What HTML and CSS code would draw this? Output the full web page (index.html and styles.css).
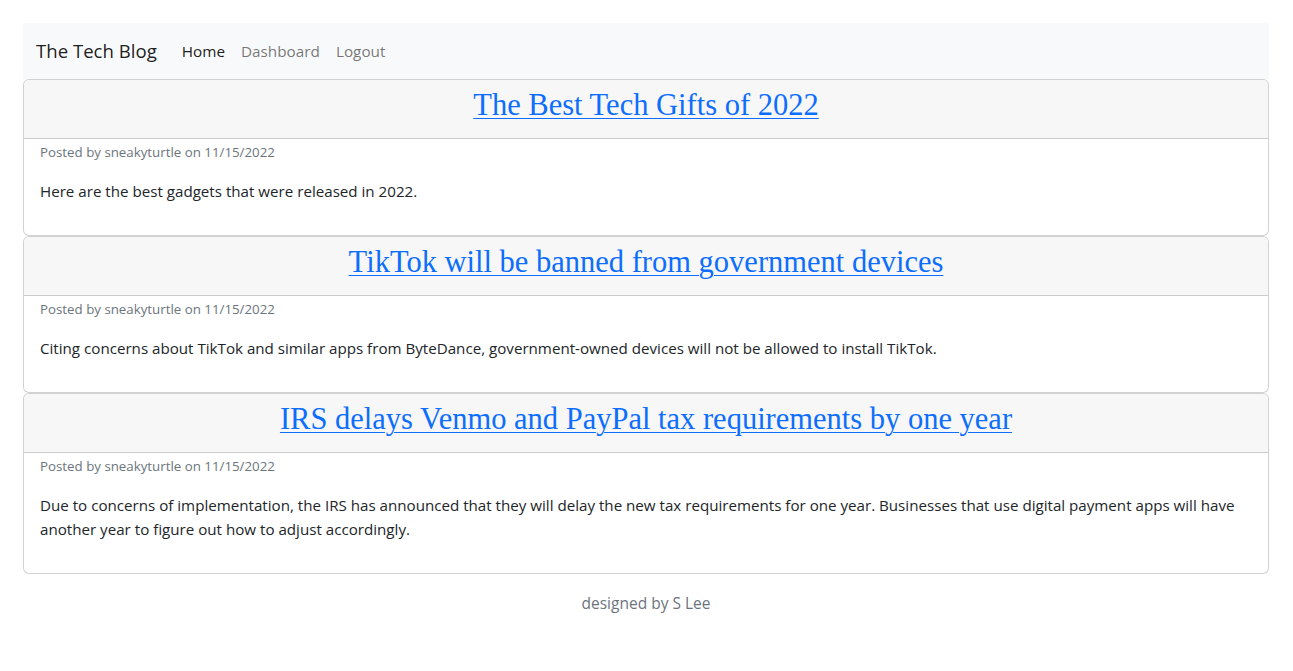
FILE: index.html
```html
<!DOCTYPE html>
<html lang="en">
<head>
<meta charset="utf-8">
<title>The Tech Blog</title>
<link rel="stylesheet" href="styles.css">
</head>
<body>
<div class="page">
  <nav class="navbar">
    <a class="brand" href="#">The Tech Blog</a>
    <ul class="nav">
      <li><a class="nav-link active" href="#">Home</a></li>
      <li><a class="nav-link" href="#">Dashboard</a></li>
      <li><a class="nav-link" href="#">Logout</a></li>
    </ul>
  </nav>
  <main class="posts">
    <article class="card">
      <header class="card-header"><h3 class="title"><a href="#">The Best Tech Gifts of 2022</a></h3></header>
      <div class="card-body">
        <p class="meta">Posted by sneakyturtle on 11/15/2022</p>
        <p class="content">Here are the best gadgets that were released in 2022.</p>
      </div>
    </article>
    <article class="card">
      <header class="card-header"><h3 class="title"><a href="#">TikTok will be banned from government devices</a></h3></header>
      <div class="card-body">
        <p class="meta">Posted by sneakyturtle on 11/15/2022</p>
        <p class="content">Citing concerns about TikTok and similar apps from ByteDance, government-owned devices will not be allowed to install TikTok.</p>
      </div>
    </article>
    <article class="card">
      <header class="card-header"><h3 class="title"><a href="#">IRS delays Venmo and PayPal tax requirements by one year</a></h3></header>
      <div class="card-body">
        <p class="meta">Posted by sneakyturtle on 11/15/2022</p>
        <p class="content">Due to concerns of implementation, the IRS has announced that they will delay the new tax requirements for one year. Businesses that use digital payment apps will have another year to figure out how to adjust accordingly.</p>
      </div>
    </article>
  </main>
  <footer class="footer">designed by S Lee</footer>
</div>
</body>
</html>
```

FILE: styles.css
```css
* { box-sizing: border-box; }
html, body { margin: 0; padding: 0; }
body {
  font-family: "Open Sans", "Noto Sans", sans-serif;
  font-size: 16px;
  line-height: 1.5;
  color: #212529;
  background: #fff;
}
.page {
  padding: 23px 24px 0 23px;
}
.navbar {
  display: flex;
  align-items: center;
  background: #f8f9fa;
  height: 56px;
  padding: 8px 13px;
}
.brand {
  font-size: 18.6px;
  line-height: 30px;
  padding: 5px 0;
  margin-right: 17px;
  color: rgba(0,0,0,.9);
  text-decoration: none;
}
.nav {
  display: flex;
  list-style: none;
  margin: 0;
  padding: 0;
}
.nav-link {
  display: block;
  padding: 8px;
  font-size: 15.3px;
  color: rgba(0,0,0,.55);
  text-decoration: none;
}
.nav-link.active { color: rgba(0,0,0,.9); }
.posts { display: flex; flex-direction: column; }
.card {
  border: 1px solid rgba(0,0,0,.175);
  border-radius: 6px;
  background: #fff;
  overflow: hidden;
}
.card-header {
  background: #f7f7f7;
  border-bottom: 1px solid rgba(0,0,0,.175);
  padding: 8px 16px;
  text-align: center;
}
.title {
  margin: 0 0 8px;
  font-family: "Liberation Serif", "Times New Roman", serif;
  font-weight: 400;
  font-size: 30.5px;
  line-height: 34px;
}
.title a { color: #0d6efd; text-decoration: underline; text-underline-offset: 3px; text-decoration-thickness: 1px; }
.card-body { padding: 3px 16px 16px; }
.meta {
  margin: 0 0 16px;
  font-size: 13.3px;
  line-height: 21px;
  color: #6c757d;
}
.content {
  margin: 0 0 16px;
  font-size: 15.15px;
  line-height: 24px;
}
.footer {
  text-align: center;
  color: #6c757d;
  font-size: 15.5px;
  line-height: 24px;
  padding-top: 17px;
}
```
